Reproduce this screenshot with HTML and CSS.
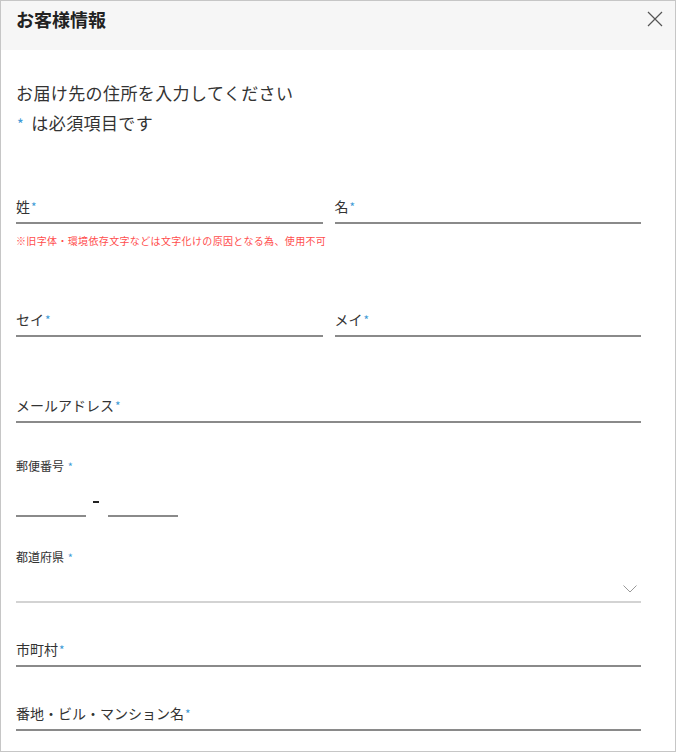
FILE: index.html
```html
<!DOCTYPE html>
<html lang="ja">
<head>
<meta charset="utf-8">
<title>お客様情報</title>
<link rel="stylesheet" href="styles.css">
</head>
<body>
<div class="modal">
  <header class="modal-head">
    <h1 class="title">お客様情報</h1>
    <button class="close" aria-label="閉じる">
      <svg width="16" height="16" viewBox="0 0 16 16"><path d="M1 1 L15 15 M15 1 L1 15" stroke="#555" stroke-width="1.2" fill="none"/></svg>
    </button>
  </header>
  <div class="modal-body">
    <div class="intro">
      <p>お届け先の住所を入力してください</p>
      <p><span class="req">*</span> は必須項目です</p>
    </div>

    <div class="row two name-row">
      <div class="col">
        <div class="field"><span class="label">姓<span class="req">*</span></span></div>
        <p class="note">※旧字体・環境依存文字などは文字化けの原因となる為、使用不可</p>
      </div>
      <div class="col">
        <div class="field"><span class="label">名<span class="req">*</span></span></div>
      </div>
    </div>

    <div class="row two kana-row">
      <div class="field"><span class="label">セイ<span class="req">*</span></span></div>
      <div class="field"><span class="label">メイ<span class="req">*</span></span></div>
    </div>

    <div class="row email-row">
      <div class="field"><span class="label">メールアドレス<span class="req">*</span></span></div>
    </div>

    <div class="row zip-row">
      <div class="small-label">郵便番号 <span class="req">*</span></div>
      <div class="zip">
        <div class="zip-box"></div>
        <span class="dash"></span>
        <div class="zip-box"></div>
      </div>
    </div>

    <div class="row pref-row">
      <div class="small-label">都道府県 <span class="req">*</span></div>
      <div class="select">
        <svg width="14" height="8" viewBox="0 0 14 8"><path d="M0.5 0.5 L7 7 L13.5 0.5" stroke="#999" stroke-width="1" fill="none"/></svg>
      </div>
    </div>

    <div class="row city-row">
      <div class="field"><span class="label">市町村<span class="req">*</span></span></div>
    </div>

    <div class="row addr-row">
      <div class="field"><span class="label">番地・ビル・マンション名<span class="req">*</span></span></div>
    </div>
  </div>
</div>
</body>
</html>
```
FILE: styles.css
```css
* { box-sizing: border-box; }
html, body { margin: 0; padding: 0; background: #fff; }
body {
  font-family: "Noto Sans CJK JP", "Noto Sans", sans-serif;
  color: #333;
}
.modal {
  width: 676px;
  height: 752px;
  border: 1px solid #c6c6c6;
  background: #fff;
  overflow: hidden;
}
.modal-head {
  height: 49px;
  background: #f6f6f6;
  display: flex;
  justify-content: space-between;
  align-items: flex-start;
  padding: 0 12px 0 15px;
}
.title {
  margin: 6px 0 0;
  font-size: 18px;
  line-height: 24px;
  font-weight: 700;
  color: #222;
}
.close {
  border: 0;
  background: none;
  padding: 0;
  margin-top: 10px;
  width: 16px;
  height: 16px;
  display: block;
}
.close svg { display: block; }
.modal-body {
  padding: 0 34px 0 15px;
}
.intro {
  margin-top: 28px;
}
.intro p {
  margin: 0;
  font-size: 17px;
  line-height: 30px;
  letter-spacing: 0.4px;
  color: #333;
}
.req {
  color: #3e9ad6;
  font-size: 0.85em;
  line-height: 1;
  margin-left: 1px;
}
.intro .req { margin-right: 3px; }
.row { display: block; }
.row.two {
  display: grid;
  grid-template-columns: 1fr 1fr;
  column-gap: 12px;
}
.col { min-width: 0; }
.field {
  border-bottom: 2px solid #8a8a8a;
  padding-bottom: 6px;
}
.label {
  display: block;
  font-size: 14px;
  line-height: 20px;
  color: #333;
}
.note {
  margin: 10px 0 0;
  font-size: 10px;
  line-height: 14px;
  letter-spacing: 0.35px;
  white-space: nowrap;
  color: #ff4d4d;
}
.name-row { margin-top: 58px; }
.kana-row { margin-top: 61px; }
.email-row { margin-top: 58px; }
.zip-row { margin-top: 35px; }
.small-label {
  font-size: 12px;
  line-height: 16px;
  color: #333;
}
.small-label .req { font-size: 11px; }
.zip {
  display: flex;
  align-items: flex-end;
  margin-top: 11px;
}
.zip-box {
  width: 70px;
  height: 32px;
  border-bottom: 2px solid #8a8a8a;
}
.dash {
  width: 6px;
  height: 2px;
  background: #222;
  margin: 0 9px 14px 7px;
}
.pref-row { margin-top: 32px; }
.select {
  height: 38px;
  border-bottom: 2px solid #d3d3d3;
  display: flex;
  justify-content: flex-end;
  align-items: flex-start;
  padding: 20px 4px 0 0;
}
.select svg { display: block; }
.city-row { margin-top: 36px; }
.addr-row { margin-top: 36px; }
```
